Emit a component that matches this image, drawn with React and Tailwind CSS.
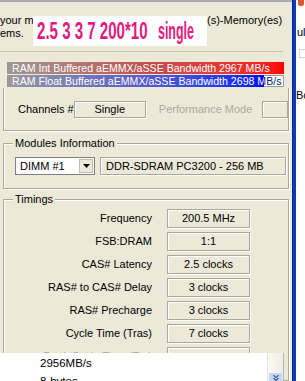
import React from 'react';
import { ChevronsDown } from 'lucide-react';

const timings = [
    ['Frequency', '200.5 MHz'],
    ['FSB:DRAM', '1:1'],
    ['CAS# Latency', '2.5 clocks'],
    ['RAS# to CAS# Delay', '3 clocks'],
    ['RAS# Precharge', '3 clocks'],
    ['Cycle Time (Tras)', '7 clocks'],
    ['Bank Cycle Time (Trc)', '', true],
];

const box = 'border border-[#aca899] shadow-[inset_1px_1px_0_#fff,1px_1px_0_#fff] bg-[#ece9d8]';
const etched = 'border border-[#aca899] shadow-[inset_1px_1px_0_#fff,1px_1px_0_#fff]';

const Group = ({ label, className, children }) => (
    <div className={`relative ml-[3px] w-[286px] ${etched} ${className}`}>
        <span className="absolute -top-[8px] left-[9px] bg-[#ece9d8] px-[2px] leading-[14px]">{label}</span>
        {children}
    </div>
);

const App = () => {
    return (
        <div className="relative w-[305px] h-[381px] overflow-hidden bg-white flex font-['Liberation_Sans',Arial,sans-serif] text-[11px] text-black">
            {/* dialog body */}
            <div className="w-[292px] h-full bg-[#ece9d8] border-t-2 border-[#a9adb8] flex flex-col">
                <div className="mt-[12px] leading-[13px] whitespace-nowrap">
                    <div className="flex">
                        <span className="w-[207px] overflow-hidden">your memory timings</span>
                        <span>(s)-Memory(es)</span>
                    </div>
                    <div>ems.</div>
                </div>

                <div className="mt-[11px] h-px w-[283px] bg-[#c9c6b6]" />

                {/* bandwidth bars */}
                <div className="mt-[10px] ml-[7px] w-[277px] flex flex-col gap-px text-[10.6px] leading-[12px] whitespace-nowrap">
                    <div className="h-[12px] bg-gradient-to-r from-[#9c9896] via-[#c05050] to-[#ff0000] text-white pl-[5px]">
                        RAM Int Buffered aEMMX/aSSE Bandwidth 2967 MB/s
                    </div>
                    <div className="relative h-[12px] bg-white border border-[#9a9a9a] text-[#0a1f7a] pl-[4px] leading-[10px]">
                        RAM Float Buffered aEMMX/aSSE Bandwidth 2698 MB/s
                        <div className="absolute -left-px -top-px h-[12px] w-[257px] overflow-hidden bg-gradient-to-r from-[#9a9a9a] via-[#5c5cc8] to-[#0000ff] text-white pl-[5px] leading-[12px]">
                            RAM Float Buffered aEMMX/aSSE Bandwidth 2698 MB/s
                        </div>
                    </div>
                </div>

                {/* channels */}
                <div className="mt-px ml-[3px] w-[286px] h-[43px] border-l border-r border-b border-[#aca899] shadow-[inset_1px_0_0_#fff,1px_1px_0_#fff] overflow-hidden">
                    <div className="mt-[13px] flex items-center whitespace-nowrap">
                        <span className="ml-[14px] w-[62px]">Channels #</span>
                        <div className={`w-[85px] h-[17px] ${box} flex items-center justify-center`}>Single</div>
                        <span className="ml-[13px] text-[#aca899]">Performance Mode</span>
                        <div className={`ml-[10px] w-[30px] h-[17px] ${box}`} />
                    </div>
                </div>

                {/* modules */}
                <Group label="Modules Information" className="mt-[12px] h-[46px]">
                    <div className="mt-[13px] ml-[11px] flex items-center gap-[5px] whitespace-nowrap">
                        <div className="w-[80px] h-[18px] bg-white border border-[#7f7f7f] flex items-center pl-[4px]">
                            <span className="flex-1">DIMM #1</span>
                            <div className="w-[14px] h-[14px] mr-[1px] bg-[#ece9d8] border border-[#c0bdae] flex items-center justify-center">
                                <svg width="7" height="4" viewBox="0 0 7 4"><path d="M0 0h7L3.5 4z" fill="#000" /></svg>
                            </div>
                        </div>
                        <div className={`w-[186px] h-[18px] ${box} flex items-center pl-[5px]`}>DDR-SDRAM PC3200 - 256 MB</div>
                    </div>
                </Group>

                {/* timings */}
                <Group label="Timings" className="mt-[10px] flex-1">
                    <div className="mt-[9px] flex flex-col gap-[4px] whitespace-nowrap">
                        {timings.map(([label, value, disabled]) => (
                            <div key={label} className="flex items-center h-[19px]">
                                <span className={`w-[148px] text-right ${disabled ? 'text-[#aca899]' : ''}`}>{label}</span>
                                <div className={`ml-[15px] w-[83px] h-[19px] ${box} flex items-center justify-center`}>{value}</div>
                            </div>
                        ))}
                    </div>
                </Group>
            </div>

            {/* window frame edge */}
            <div className="w-[4px] h-full bg-[#0b3abf] border-l border-[#08298f]" />
            <div className="relative flex-1 h-full bg-white overflow-hidden leading-[13px] whitespace-nowrap">
                <div className="mt-0 ml-[2px] w-[6px] h-[6px] bg-[#e05a2a] rounded-b-[2px]" />
                <div className="mt-[20px] ml-[1px] w-[8px] overflow-hidden">ul</div>
                <div className="mt-[10px] ml-[3px] w-[8px] h-[9px] border border-[#d4d4d4]" />
                <div className="mt-[31px] w-[9px] overflow-hidden">Bo</div>
            </div>

            {/* value header overlay */}
            <div className="absolute left-[33px] top-[16px] w-[174px] h-[30px] bg-white">
                <span className="absolute left-[4px] top-0 origin-left scale-x-[0.655] font-bold text-[23px] leading-[30px] text-[#e3197d] whitespace-nowrap">2.5 3 3 7 200*10</span>
                <span className="absolute left-[125px] top-0 origin-left scale-x-[0.54] font-bold text-[23px] leading-[30px] text-[#e3197d] whitespace-nowrap">single</span>
            </div>

            {/* dropdown popup at bottom */}
            <div className="absolute left-0 top-[353px] w-[284px] h-[28px] bg-white border-r border-[#b4b4b4] flex">
                <div className="flex-1 pl-[40px] pt-[1px] leading-[18px] text-[11.5px] whitespace-nowrap">
                    <div>2956MB/s</div>
                    <div>8-bytes</div>
                </div>
                <div className="w-[16px] h-full bg-gradient-to-r from-[#fafaf6] to-[#eeede5] border-l border-[#e6e4da] flex flex-col justify-end items-center">
                    <div className="w-[13px] h-[8px] bg-[#c6d5fa] flex items-start justify-center overflow-hidden">
                        <ChevronsDown className="w-[10px] h-[10px] text-[#4d6185]" strokeWidth={3} />
                    </div>
                </div>
            </div>
        </div>
    );
};

export default App;
